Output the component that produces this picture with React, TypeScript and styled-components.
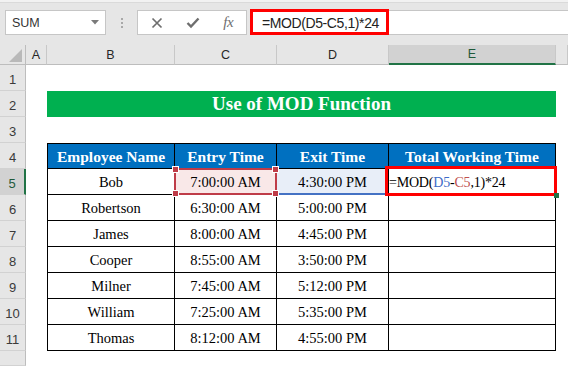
import React from 'react';
import styled, { createGlobalStyle, css } from 'styled-components';

const Global = createGlobalStyle`
  html, body { margin: 0; padding: 0; background: #e6e6e6; }
  body { width: 568px; height: 366px; overflow: hidden; font-family: "Liberation Sans", Arial, sans-serif; }
  * { box-sizing: border-box; }
`;

const Window = styled.div`
  width: 568px;
  height: 366px;
  display: flex;
  flex-direction: column;
  background: #e6e6e6;
  overflow: hidden;
`;

const FormulaBar = styled.div`
  height: 45px;
  flex: none;
  display: flex;
  align-items: flex-start;
  padding: 10px 0 0 5px;
  background: linear-gradient(#f2f2f2 0, #f2f2f2 2px, #dadada 2px, #dadada 3px, #e6e6e6 3px);
`;

const NameBox = styled.div`
  width: 101px;
  height: 25px;
  background: #fff;
  border: 1px solid #c6c6c6;
  display: flex;
  align-items: center;
  justify-content: space-between;
  padding: 0 6px 0 6px;
  font-size: 12.5px;
  color: #333;
`;

const Grip = styled.div`
  width: 2px;
  margin: 8px 14px 0 15px;
  display: flex;
  flex-direction: column;
  gap: 2px;
`;

const GripDot = styled.span`
  width: 2px;
  height: 2px;
  background: #a8a8a8;
`;

const IconBox = styled.div`
  width: 110px;
  height: 25px;
  background: #fff;
  border: 1px solid #c6c6c6;
  display: flex;
  align-items: center;
  padding-left: 1px;
  margin-right: 3px;
`;

const IconSlot = styled.div`
  width: 36px;
  height: 23px;
  display: flex;
  align-items: center;
  justify-content: center;
  color: #6e6e6e;
`;

const FxText = styled.span`
  font-family: "Liberation Serif", "Times New Roman", serif;
  font-style: italic;
  font-size: 15px;
  color: #6e6e6e;
  letter-spacing: -0.5px;
`;

const FormulaInput = styled.div`
  position: relative;
  flex: 1;
  height: 25px;
  background: #fff;
  border: 1px solid #c6c6c6;
  border-right: none;
  display: flex;
  align-items: center;
  padding-left: 11px;
  font-size: 14px;
  letter-spacing: -0.4px;
  color: #222;
`;

const RedFrame = styled.div<{ $top: number; $left: number; $right?: number; $bottom?: number; $w?: number; $h?: number }>`
  position: absolute;
  top: ${(p) => p.$top}px;
  left: ${(p) => p.$left}px;
  ${(p) => (p.$w !== undefined ? css`width: ${p.$w}px;` : css`right: ${p.$right}px;`)}
  ${(p) => (p.$h !== undefined ? css`height: ${p.$h}px;` : css`bottom: ${p.$bottom}px;`)}
  border: 3px solid #ff0000;
  pointer-events: none;
  z-index: 3;
`;

const Sheet = styled.div`
  flex: 1;
  display: grid;
  grid-template-columns: 26px 21px 128px 102px 112px 167px 1fr;
  grid-template-rows: 20px repeat(11, 26px) 1fr;
  background: #fff;
`;

const Corner = styled.div`
  position: relative;
  background: #e6e6e6;
  border-right: 1px solid #bdbdbd;
  border-bottom: 1px solid #bdbdbd;
  &::after {
    content: '';
    position: absolute;
    right: 3px;
    bottom: 2px;
    width: 0;
    height: 0;
    border-left: 13px solid transparent;
    border-bottom: 13px solid #b9b9b9;
  }
`;

const ColHead = styled.div<{ $active?: boolean }>`
  background: ${(p) => (p.$active ? '#d2d2d2' : '#e6e6e6')};
  border-right: 1px solid #c8c8c8;
  border-bottom: ${(p) => (p.$active ? '2px solid #217346' : '1px solid #bdbdbd')};
  display: flex;
  align-items: center;
  justify-content: center;
  font-size: 12.5px;
  color: ${(p) => (p.$active ? '#1f5a3a' : '#262626')};
`;

const RowHead = styled.div<{ $active?: boolean }>`
  background: ${(p) => (p.$active ? '#d2d2d2' : '#e6e6e6')};
  border-right: ${(p) => (p.$active ? '2px solid #217346' : '1px solid #bdbdbd')};
  border-bottom: 1px solid #d2d2d2;
  display: flex;
  align-items: flex-end;
  justify-content: center;
  padding-bottom: 3px;
  font-size: 13px;
  color: ${(p) => (p.$active ? '#1f5a3a' : '#3a3a3a')};
`;

const Blank = styled.div`
  background: #fff;
`;

const Title = styled.div`
  grid-column: 3 / span 4;
  background: #00b050;
  color: #fff;
  font-family: "Liberation Serif", "Times New Roman", serif;
  font-weight: bold;
  font-size: 19px;
  display: flex;
  align-items: center;
  justify-content: center;
`;

const serif = css`
  font-family: "Liberation Serif", "Times New Roman", serif;
`;

const TH = styled.div<{ $first?: boolean }>`
  ${serif}
  background: #0070c0;
  color: #fff;
  font-weight: bold;
  font-size: 15.5px;
  border-top: 1px solid #000;
  border-right: 1px solid #000;
  border-bottom: 1px solid #000;
  ${(p) => p.$first && css`border-left: 1px solid #000;`}
  display: flex;
  align-items: center;
  justify-content: center;
  padding-top: 1px;
`;

type Tone = 'none' | 'pink' | 'blue';

const TD = styled.div<{ $first?: boolean; $tone?: Tone; $left?: boolean }>`
  ${serif}
  position: relative;
  font-size: 14.5px;
  color: #000;
  background: ${(p) => (p.$tone === 'pink' ? '#f9e8e8' : p.$tone === 'blue' ? '#e8eef8' : '#fff')};
  border-right: 1px solid #000;
  border-bottom: ${(p) => (p.$tone === 'blue' ? '2px solid #4472c4' : '1px solid #000')};
  ${(p) => p.$first && css`border-left: 1px solid #000;`}
  display: flex;
  align-items: center;
  justify-content: ${(p) => (p.$left ? 'flex-start' : 'center')};
  padding-top: 2px;
  white-space: nowrap;
`;

const FormulaCellText = styled.span`
  font-size: 14px;
  letter-spacing: -0.2px;
`;

const Selection = styled.div`
  position: absolute;
  top: -1px;
  left: -1px;
  right: -1px;
  bottom: -1px;
  border: 2px solid #bf3c48;
  z-index: 2;
  pointer-events: none;
`;

const Handle = styled.span<{ $x: 'l' | 'r'; $y: 't' | 'b' }>`
  position: absolute;
  width: 7px;
  height: 7px;
  background: #bf3c48;
  border: 1px solid #fff;
  ${(p) => (p.$x === 'l' ? css`left: -4px;` : css`right: -4px;`)}
  ${(p) => (p.$y === 't' ? css`top: -4px;` : css`bottom: -4px;`)}
`;

const FillHandle = styled.span`
  position: absolute;
  right: -4px;
  bottom: -4px;
  width: 5px;
  height: 5px;
  background: #217346;
  z-index: 4;
`;

const Ref = styled.span<{ $c: string }>`
  color: ${(p) => p.$c};
`;

const rows = [
  ['Bob', '7:00:00 AM', '4:30:00 PM'],
  ['Robertson', '6:30:00 AM', '5:00:00 PM'],
  ['James', '8:00:00 AM', '4:45:00 PM'],
  ['Cooper', '8:55:00 AM', '3:50:00 PM'],
  ['Milner', '7:45:00 AM', '5:12:00 PM'],
  ['William', '7:25:00 AM', '5:35:00 PM'],
  ['Thomas', '8:12:00 AM', '4:55:00 PM'],
];

const XIcon = () => (
  <svg width="12" height="12" viewBox="0 0 12 12">
    <path d="M1.5 1.5 L10.5 10.5 M10.5 1.5 L1.5 10.5" stroke="#6e6e6e" strokeWidth="1.7" fill="none" />
  </svg>
);

const CheckIcon = () => (
  <svg width="14" height="12" viewBox="0 0 14 12">
    <path d="M1.5 6 L5 9.5 L12.5 1.5" stroke="#6e6e6e" strokeWidth="2.4" fill="none" />
  </svg>
);

const Caret = () => (
  <svg width="8" height="5" viewBox="0 0 8 5">
    <polygon points="0,0 8,0 4,4.5" fill="#7a7a7a" />
  </svg>
);

export default function App() {
  const cols = ['A', 'B', 'C', 'D', 'E', ''];
  const cells: React.ReactNode[] = [];

  cells.push(<Corner key="corner" />);
  cols.forEach((c, i) => cells.push(<ColHead key={`h${i}`} $active={c === 'E'}>{c}</ColHead>));

  for (let r = 1; r <= 12; r++) {
    cells.push(
      <RowHead key={`r${r}`} $active={r === 5}>
        {r <= 11 ? r : ''}
      </RowHead>
    );
    if (r === 2) {
      cells.push(<Blank key="2a" />);
      cells.push(<Title key="title">Use of MOD Function</Title>);
      cells.push(<Blank key="2f" />);
    } else if (r === 4) {
      cells.push(<Blank key="4a" />);
      cells.push(<TH key="th1" $first>Employee Name</TH>);
      cells.push(<TH key="th2">Entry Time</TH>);
      cells.push(<TH key="th3">Exit Time</TH>);
      cells.push(<TH key="th4">Total Working Time</TH>);
      cells.push(<Blank key="4f" />);
    } else if (r >= 5 && r <= 11) {
      const [name, entry, exit] = rows[r - 5];
      const sel = r === 5;
      cells.push(<Blank key={`${r}a`} />);
      cells.push(<TD key={`${r}b`} $first>{name}</TD>);
      cells.push(
        <TD key={`${r}c`} $tone={sel ? 'pink' : 'none'}>
          {entry}
          {sel && (
            <Selection>
              <Handle $x="l" $y="t" />
              <Handle $x="r" $y="t" />
              <Handle $x="l" $y="b" />
              <Handle $x="r" $y="b" />
            </Selection>
          )}
        </TD>
      );
      cells.push(
        <TD key={`${r}d`} $tone={sel ? 'blue' : 'none'}>
          {exit}
        </TD>
      );
      cells.push(
        <TD key={`${r}e`} $left={sel}>
          {sel && (
            <>
              <FormulaCellText>
                =MOD(<Ref $c="#3f6cc8">D5</Ref>-<Ref $c="#c0504d">C5</Ref>,1)*24
              </FormulaCellText>
              <RedFrame $top={-3} $left={-4} $right={-2} $bottom={-2} />
              <FillHandle />
            </>
          )}
        </TD>
      );
      cells.push(<Blank key={`${r}f`} />);
    } else {
      for (let c = 0; c < 6; c++) cells.push(<Blank key={`${r}-${c}`} />);
    }
  }

  return (
    <Window>
      <Global />
      <FormulaBar>
        <NameBox>
          <span>SUM</span>
          <Caret />
        </NameBox>
        <Grip>
          <GripDot />
          <GripDot />
          <GripDot />
        </Grip>
        <IconBox>
          <IconSlot>
            <XIcon />
          </IconSlot>
          <IconSlot>
            <CheckIcon />
          </IconSlot>
          <IconSlot>
            <FxText>fx</FxText>
          </IconSlot>
        </IconBox>
        <FormulaInput>
          =MOD(D5-C5,1)*24
          <RedFrame $top={-2} $left={-1} $w={139} $h={26} />
        </FormulaInput>
      </FormulaBar>
      <Sheet>{cells}</Sheet>
    </Window>
  );
}
